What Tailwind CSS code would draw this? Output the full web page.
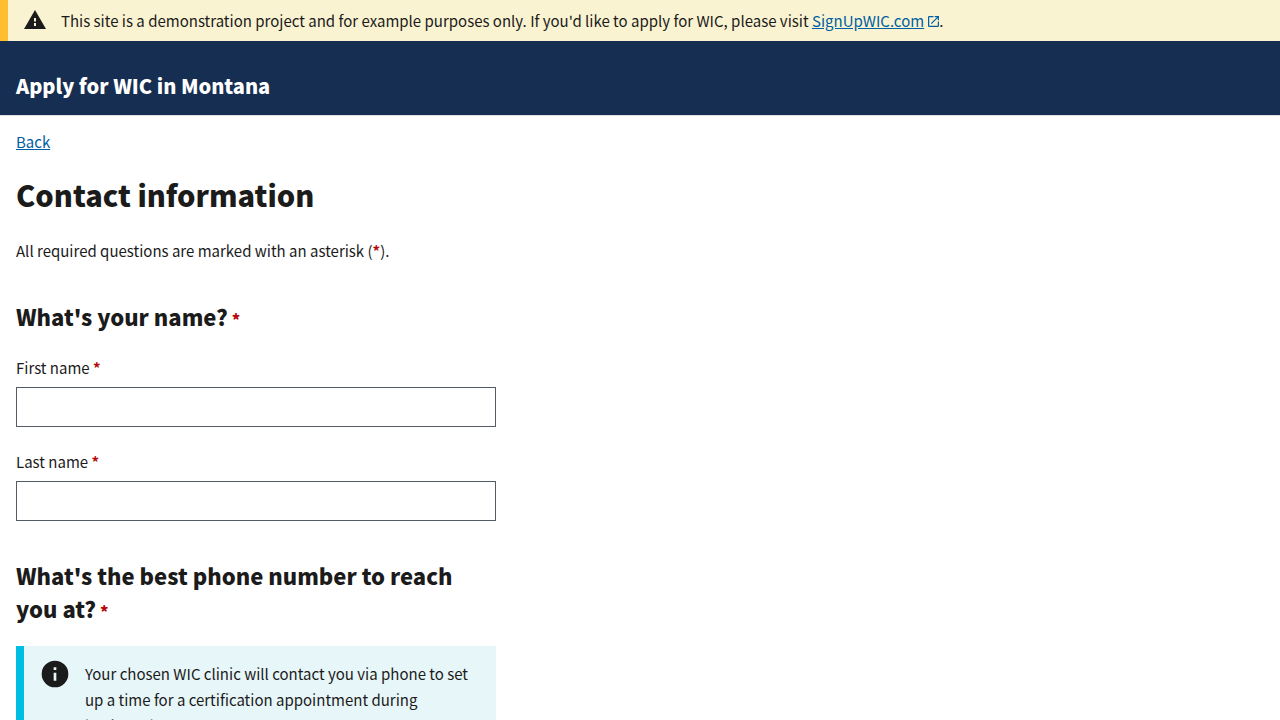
<!DOCTYPE html>
<html lang="en">
<head>
<meta charset="utf-8">
<meta name="viewport" content="width=device-width, initial-scale=1">
<title>Contact information</title>
<script src="https://cdn.jsdelivr.net/npm/@tailwindcss/browser@4"></script>
</head>
<body class="bg-white font-['Noto_Sans_CJK_SC','Noto_Sans',sans-serif] text-[15px] leading-[26px] text-[#1b1b1b]">
<aside class="flex items-start gap-[14px] border-l-8 border-[#ffbe2e] bg-[#faf3d1] pt-2 pr-4 pb-[7px] pl-[15px]" aria-label="Site notice">
  <svg class="h-6 w-6 shrink-0 fill-[#1b1b1b]" viewBox="0 0 24 24" aria-hidden="true"><path d="M1 21h22L12 2 1 21zm12-3h-2v-3h2v3zm0-4.500h-2v-3.500h2v3.500z"/></svg>
  <p>This site is a demonstration project and for example purposes only. If you'd like to apply for WIC, please visit <a class="text-[#005ea2]" href="https://www.signupwic.com"><span class="underline">SignUpWIC.com</span><svg class="ml-1 inline size-[11px] fill-current align-baseline" viewBox="3 3 18 18" aria-hidden="true"><path d="M19 19H5V5h7V3H5a2 2 0 0 0-2 2v14a2 2 0 0 0 2 2h14c1.1 0 2-.9 2-2v-7h-2v7zM14 3v2h3.59l-9.83 9.83 1.41 1.41L19 6.41V10h2V3h-7z"/></svg></a>.</p>
</aside>
<header class="border-b border-[#dfe1e2] bg-[#162e51] px-4 pt-8 pb-4 text-white">
  <p class="text-xl leading-[26px] font-black">Apply for WIC in Montana</p>
</header>
<main class="px-4 pt-[13px] pb-10">
  <a class="text-[#005ea2] underline" href="#">Back</a>
  <h1 class="mt-5 text-[29px] leading-[38px] font-black">Contact information</h1>
  <p class="mt-[25px]">All required questions are marked with an asterisk (<abbr class="font-bold text-[#b50909] no-underline" title="required">*</abbr>).</p>
  <form class="max-w-[480px]">
    <fieldset>
      <legend class="pt-9 text-[22px] leading-[33px] font-black">What's your name?<abbr class="ml-1 text-base leading-none text-[#b50909] no-underline" title="required">*</abbr></legend>
      <label class="mt-[22px] block" for="first">First name <abbr class="font-bold text-[#b50909] no-underline" title="required">*</abbr></label>
      <input class="mt-[6px] block h-10 w-full border border-[#565c65] bg-white px-2" id="first" type="text" required>
      <label class="mt-[22px] block" for="last">Last name <abbr class="font-bold text-[#b50909] no-underline" title="required">*</abbr></label>
      <input class="mt-[6px] block h-10 w-full border border-[#565c65] bg-white px-2" id="last" type="text" required>
    </fieldset>
    <fieldset>
      <legend class="pt-[38px] text-[22px] leading-[33px] font-black">What's the best phone number to reach you at?<abbr class="ml-1 text-base leading-none text-[#b50909] no-underline" title="required">*</abbr></legend>
      <div class="mt-[21px] flex gap-[14px] border-l-8 border-[#00bde3] bg-[#e7f6f8] pt-[15px] pr-4 pb-4 pl-[15px]">
        <svg class="-mt-[3px] h-8 w-8 shrink-0 fill-[#1b1b1b]" viewBox="0 0 24 24" aria-hidden="true"><path d="M12 2a10 10 0 1 0 0 20 10 10 0 0 0 0-20zm1 15h-2v-6h2v6zm0-8h-2V7h2v2z"/></svg>
        <p>Your chosen WIC clinic will contact you via phone to set up a time for a certification appointment during business hours.</p>
      </div>
    </fieldset>
  </form>
</main>
</body>
</html>
